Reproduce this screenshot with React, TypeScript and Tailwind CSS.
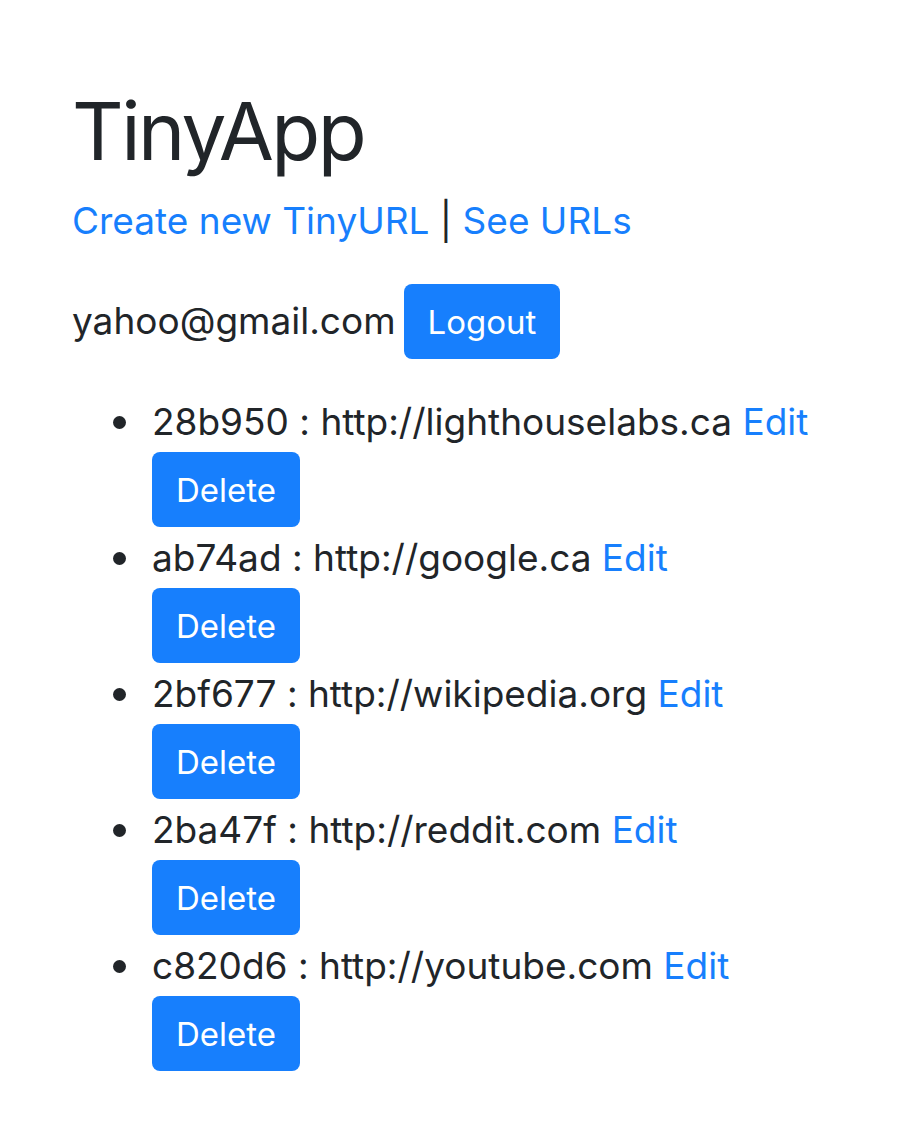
import React from 'react';

const urls = [
  { id: '28b950', long: 'http://lighthouselabs.ca' },
  { id: 'ab74ad', long: 'http://google.ca' },
  { id: '2bf677', long: 'http://wikipedia.org' },
  { id: '2ba47f', long: 'http://reddit.com' },
  { id: 'c820d6', long: 'http://youtube.com' },
];

const btn =
  'flex h-[75px] items-center justify-center rounded-[8px] bg-[#177ffd] px-[24px] text-[33px] leading-[48px] text-white';

export default function App() {
  return (
    <div className="min-h-[1140px] bg-white px-[72px] pt-[83px] text-[37px] leading-[56px] text-[#212529] [font-family:Inter,'Liberation_Sans',sans-serif] [font-feature-settings:'calt'_0]">
      <h1 className="text-[80px] leading-[96px] font-normal tracking-[-2.5px]">TinyApp</h1>

      <p className="mt-[14px]">
        <a href="#" className="text-[#177ffd]">Create new TinyURL</a> |{' '}
        <a href="#" className="text-[#177ffd]">See URLs</a>
      </p>

      <div className="mt-[35px] flex items-baseline gap-[8px]">
        <span>yahoo@gmail.com</span>
        <button className={btn}>Logout</button>
      </div>

      <ul className="mt-[35px] list-none pl-[80px]">
        {urls.map((u) => (
          <li
            key={u.id}
            className="relative before:absolute before:top-[22px] before:left-[-39px] before:h-[13px] before:w-[13px] before:rounded-full before:bg-[#212529] before:content-['']"
          >
            {u.id} : {u.long}{' '}
            <a href="#" className="text-[#177ffd]">Edit</a>
            <form className="mt-[2px] mb-[3px] flex" onSubmit={(e) => e.preventDefault()}>
              <button className={btn}>Delete</button>
            </form>
          </li>
        ))}
      </ul>
    </div>
  );
}
